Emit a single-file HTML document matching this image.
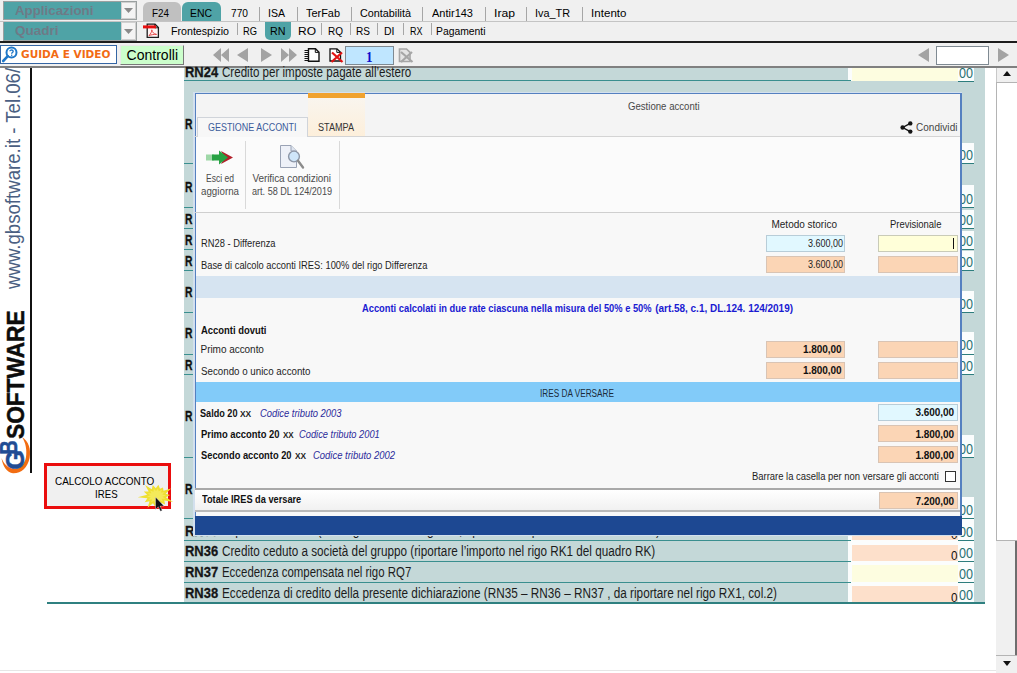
<!DOCTYPE html>
<html lang="it">
<head>
<meta charset="utf-8">
<title>Gestione acconti</title>
<style>
html,body{margin:0;padding:0;}
body{width:1017px;height:673px;position:relative;overflow:hidden;background:#fff;font-family:"Liberation Sans",sans-serif;font-size:12px;color:#000;}
.a{position:absolute;white-space:nowrap;}
.b{position:absolute;box-sizing:border-box;}
svg{position:absolute;overflow:visible;}
.sep{width:1px;background:#a6a6a6;}
.hl{height:1px;background:#3a8f8f;}
.wb{left:961px;width:13px;background:#fbfdfd;}
.inp{height:17px;border:1px solid #c3cbd3;}
.peach{background:#fbd5b5;border-color:#d9c4b4;}
.cyan{background:#e1f8ff;border-color:#b8cdd8;}
.yel{background:#ffffd9;border-color:#c9cbb8;}
</style>
</head>
<body>
<!-- TOP BARS -->
<div class="b" style="left:0;top:0;width:1017px;height:41px;background:#f0f0f0;"></div>
<div class="b" style="left:0;top:41px;width:1017px;height:2px;background:#1c1c1c;"></div>
<div class="b" style="left:0;top:43px;width:1017px;height:23px;background:#f0f0f0;"></div>
<div class="b" style="left:0;top:66px;width:1017px;height:2px;background:#808080;"></div>
<!-- combos -->
<div class="b" style="left:3px;top:1px;width:134px;height:19px;background:#fff;border:1px solid #9aa0a0;"></div>
<div class="b" style="left:4px;top:2px;width:117px;height:17px;background:#4fa3a6;"></div>
<div class="b" style="left:121px;top:2px;width:15px;height:17px;background:#f4f4f4;border:1px solid #d0d0d0;"></div>
<svg style="left:124px;top:8px" width="9" height="5"><path d="M0 0H9L4.5 5Z" fill="#8a8a8a"/></svg>
<div class="b" style="left:3px;top:21px;width:134px;height:20px;background:#fff;border:1px solid #9aa0a0;"></div>
<div class="b" style="left:4px;top:22px;width:117px;height:18px;background:#4fa3a6;"></div>
<div class="b" style="left:121px;top:22px;width:15px;height:18px;background:#f4f4f4;border:1px solid #d0d0d0;"></div>
<svg style="left:124px;top:29px" width="9" height="5"><path d="M0 0H9L4.5 5Z" fill="#8a8a8a"/></svg>
<!-- tabs row 1 -->
<div class="b" style="left:143px;top:2px;width:38px;height:19px;background:#c0c0c0;border-radius:6px 6px 0 0;"></div>
<div class="b" style="left:182px;top:2px;width:39px;height:19px;background:#4fa3a6;border-radius:6px 6px 0 0;"></div>
<div class="b sep" style="left:259px;top:7px;height:14px;"></div>
<div class="b sep" style="left:297px;top:7px;height:14px;"></div>
<div class="b sep" style="left:351px;top:7px;height:14px;"></div>
<div class="b sep" style="left:422px;top:7px;height:14px;"></div>
<div class="b sep" style="left:485px;top:7px;height:14px;"></div>
<div class="b sep" style="left:526px;top:7px;height:14px;"></div>
<div class="b sep" style="left:582px;top:7px;height:14px;"></div>
<div class="b" style="left:0;top:21px;width:1017px;height:1px;background:#c4c4c4;"></div>
<!-- tabs row 2 -->
<div class="b" style="left:265px;top:22px;width:26px;height:18px;background:#4fa3a6;border-radius:0 0 5px 5px;"></div>
<div class="b sep" style="left:237px;top:23px;height:12px;"></div>
<div class="b sep" style="left:321px;top:23px;height:12px;"></div>
<div class="b sep" style="left:350px;top:23px;height:12px;"></div>
<div class="b sep" style="left:377px;top:23px;height:12px;"></div>
<div class="b sep" style="left:403px;top:23px;height:12px;"></div>
<div class="b sep" style="left:431px;top:23px;height:12px;"></div>
<!-- pdf icon -->
<svg style="left:142.5px;top:23px" width="16" height="15" viewBox="0 0 16 15"><path d="M4.2 1.2H12L15.4 4.6V14.4H4.2Z" fill="#fff4f4" stroke="#1e1e1e" stroke-width="1.3"/><path d="M11.8 1.2V4.8H15.4" fill="none" stroke="#1e1e1e" stroke-width="1"/><rect x="0" y="2.4" width="13" height="3" fill="#e60f0f"/><path d="M6 12.6C8 10.5 8.8 8.6 8.8 6.8C9.2 9.2 10.8 11 13.6 11.4C10.8 11.2 8.2 11.8 6 12.6Z" fill="none" stroke="#e23c3c" stroke-width="0.9"/></svg>
<!-- row 3 buttons -->
<div class="b" style="left:0;top:45px;width:117px;height:19px;background:#fff;border:1px solid #3465a4;"></div>
<svg style="left:2px;top:46px" width="16" height="17" viewBox="0 0 16 17"><circle cx="9.5" cy="6.5" r="5" fill="#fff" stroke="#1f77c8" stroke-width="2"/><path d="M5.8 10.2L1.2 15" stroke="#1f77c8" stroke-width="2.6" stroke-linecap="round"/><path d="M8 5.2C8 3.6 11.2 3.6 11.2 5.3C11.2 6.5 9.6 6.5 9.6 7.8" fill="none" stroke="#1f77c8" stroke-width="1.3"/><rect x="9" y="8.6" width="1.3" height="1.3" fill="#1f77c8"/></svg>
<div class="b" style="left:120px;top:45px;width:64px;height:20px;background:#ccffcc;border:1px solid;border-color:#e8e8e8 #7a7a7a #7a7a7a #e8e8e8;"></div>
<!-- nav arrows -->
<svg style="left:213px;top:48px" width="16" height="14" viewBox="0 0 16 14"><path d="M8 0V14L0 7ZM16 0V14L8 7Z" fill="#a3a3a3"/></svg>
<svg style="left:237px;top:48px" width="11" height="14" viewBox="0 0 11 14"><path d="M11 0V14L0 7Z" fill="#a3a3a3"/></svg>
<svg style="left:261px;top:48px" width="11" height="14" viewBox="0 0 11 14"><path d="M0 0V14L11 7Z" fill="#a3a3a3"/></svg>
<svg style="left:281px;top:48px" width="16" height="14" viewBox="0 0 16 14"><path d="M0 0V14L8 7ZM8 0V14L16 7Z" fill="#a3a3a3"/></svg>
<!-- doc icons -->
<svg style="left:304px;top:48px" width="16" height="14" viewBox="0 0 16 14"><path d="M4.5 0.8H11.5L15 4.2V13.2H4.5Z" fill="#fff" stroke="#111" stroke-width="1.4"/><path d="M11.3 1V4.4H14.8" fill="none" stroke="#111" stroke-width="1"/><path d="M0.5 2.5H4M0.5 4.5H4M0.5 6.5H4M0.5 8.5H4M0.5 10.5H4M0.5 12.5H4" stroke="#111" stroke-width="1"/></svg>
<svg style="left:329px;top:48px" width="15" height="15" viewBox="0 0 15 15"><path d="M1 0.8H8L11.5 4.2V13H1Z" fill="#fff" stroke="#111" stroke-width="1.3"/><path d="M7.8 1V4.4H11.3" fill="none" stroke="#111" stroke-width="1"/><path d="M3 4.5L13.5 14M13 4.5L2.5 14" stroke="#e21212" stroke-width="2.2"/></svg>
<div class="b" style="left:345px;top:46px;width:49px;height:19px;background:#bfe6ff;border:1px solid #7f8a92;"></div>
<svg style="left:398px;top:48px" width="16" height="15" viewBox="0 0 16 15"><path d="M1.5 1H8.5L12 4.4V13.5H1.5Z" fill="#e4e4e4" stroke="#a6a6a6" stroke-width="1.6"/><path d="M3 4L14.5 14M14 4L3 14" stroke="#a6a6a6" stroke-width="2.2"/></svg>
<!-- right nav -->
<svg style="left:918px;top:48px" width="11" height="14" viewBox="0 0 11 14"><path d="M11 0V14L0 7Z" fill="#a3a3a3"/></svg>
<div class="b" style="left:936px;top:46px;width:53px;height:19px;background:#fff;border:1px solid #7f8a92;"></div>
<svg style="left:998px;top:48px" width="11" height="14" viewBox="0 0 11 14"><path d="M0 0V14L11 7Z" fill="#a3a3a3"/></svg>

<!-- LEFT SIDEBAR -->
<div class="b" style="left:30px;top:68px;width:2px;height:405px;background:#111;"></div>
<div class="a" style="left:-2px;top:289px;height:30px;transform-origin:0 0;transform:rotate(-90deg) scaleX(0.955);font-size:19.5px;line-height:30px;color:#4b5f82;">www.gbsoftware.it - Tel.06/</div>
<div class="a" style="left:0.5px;top:439px;height:30px;transform-origin:0 0;transform:rotate(-90deg) scaleX(0.945);font-size:24px;line-height:30px;font-weight:bold;color:#0c0c0c;-webkit-text-stroke:0.5px #0c0c0c;">SOFTWARE</div>
<!-- GB logo -->
<svg style="left:0;top:425px" width="32" height="50" viewBox="0 0 32 50"><path d="M22 12C28.5 16 31.3 24 29.6 33C27.8 42.5 21 48.6 13 48.3C7 47.8 2.6 41 1.5 33C4 39 8 43.4 14 44C20 44.4 24.6 40 26 32C27 25 25.8 18 22 12Z" fill="#f26d12"/><text transform="translate(24.3,44.5) rotate(-90)" font-family="Liberation Sans,sans-serif" font-weight="bold" font-size="25" fill="#214c94" stroke="#214c94" stroke-width="0.5">G</text><text transform="translate(17.3,29.5) rotate(-90) scale(0.84,1)" font-family="Liberation Sans,sans-serif" font-weight="bold" font-size="23.5" fill="#214c94" stroke="#214c94" stroke-width="0.5">B</text></svg>

<!-- CALCOLO button -->
<div class="b" style="left:44px;top:463px;width:127px;height:46px;background:#f0f0f0;border:3px solid #ea0d0d;"></div>

<!-- FORM BACKGROUND -->
<div class="b" style="left:184px;top:68px;width:801px;height:535px;background:#c4d8d8;"></div>
<!-- RN24 field -->
<div class="b" style="left:848px;top:68px;width:126px;height:13px;background:#fbfdfd;"></div><div class="b" style="left:852px;top:68px;width:106px;height:13px;background:#fdfde0;"></div>
<!-- form row lines + right column -->
<div class="b" style="left:848px;top:143px;width:126px;height:21px;background:#fbfdfd;"></div>
<div class="b" style="left:848px;top:185px;width:126px;height:22px;background:#fbfdfd;"></div>
<div class="b" style="left:848px;top:210px;width:126px;height:18px;background:#fbfdfd;"></div>
<div class="b" style="left:848px;top:231px;width:126px;height:18px;background:#fbfdfd;"></div>
<div class="b" style="left:848px;top:251px;width:126px;height:19px;background:#fbfdfd;"></div>
<div class="b" style="left:848px;top:291px;width:126px;height:21px;background:#fbfdfd;"></div>
<div class="b" style="left:848px;top:332px;width:126px;height:22px;background:#fbfdfd;"></div>
<div class="b" style="left:848px;top:354px;width:126px;height:21px;background:#fbfdfd;"></div>
<div class="b" style="left:848px;top:435px;width:126px;height:23px;background:#fbfdfd;"></div>
<div class="b" style="left:848px;top:497px;width:126px;height:106px;background:#fbfdfd;"></div>
<div class="b" style="left:852px;top:519px;width:106px;height:21px;background:#fde0cb;"></div>
<div class="b" style="left:852px;top:545px;width:106px;height:16px;background:#fde0cb;"></div>
<div class="b" style="left:852px;top:565px;width:106px;height:17px;background:#fdfde0;"></div>
<div class="b" style="left:852px;top:586px;width:106px;height:17px;background:#fde0cb;"></div>
<div class="b hl" style="left:184px;top:80px;width:667px;"></div>
<div class="b hl" style="left:184px;top:163px;width:667px;"></div>
<div class="b hl" style="left:184px;top:207px;width:667px;"></div>
<div class="b hl" style="left:184px;top:228px;width:667px;"></div>
<div class="b hl" style="left:184px;top:249px;width:667px;"></div>
<div class="b hl" style="left:184px;top:270px;width:667px;"></div>
<div class="b hl" style="left:184px;top:312px;width:667px;"></div>
<div class="b hl" style="left:184px;top:354px;width:667px;"></div>
<div class="b hl" style="left:184px;top:374px;width:667px;"></div>
<div class="b hl" style="left:184px;top:457px;width:667px;"></div>
<div class="b hl" style="left:184px;top:518px;width:667px;"></div>
<div class="b hl" style="left:184px;top:540px;width:667px;"></div>
<div class="b hl" style="left:184px;top:561px;width:667px;"></div>
<div class="b hl" style="left:184px;top:582px;width:667px;"></div>
<div class="b" style="left:958px;top:81px;width:16px;height:1px;background:#2d7d7d;"></div>
<div class="b" style="left:958px;top:163px;width:16px;height:1px;background:#2d7d7d;"></div>
<div class="b" style="left:958px;top:207px;width:16px;height:1px;background:#2d7d7d;"></div>
<div class="b" style="left:958px;top:228px;width:16px;height:1px;background:#2d7d7d;"></div>
<div class="b" style="left:958px;top:249px;width:16px;height:1px;background:#2d7d7d;"></div>
<div class="b" style="left:958px;top:270px;width:16px;height:1px;background:#2d7d7d;"></div>
<div class="b" style="left:958px;top:312px;width:16px;height:1px;background:#2d7d7d;"></div>
<div class="b" style="left:958px;top:354px;width:16px;height:1px;background:#2d7d7d;"></div>
<div class="b" style="left:958px;top:374px;width:16px;height:1px;background:#2d7d7d;"></div>
<div class="b" style="left:958px;top:457px;width:16px;height:1px;background:#2d7d7d;"></div>
<div class="b" style="left:958px;top:518px;width:16px;height:1px;background:#2d7d7d;"></div>
<div class="b" style="left:958px;top:540px;width:16px;height:1px;background:#2d7d7d;"></div>
<div class="b" style="left:958px;top:561px;width:16px;height:1px;background:#2d7d7d;"></div>
<div class="b" style="left:958px;top:582px;width:16px;height:1px;background:#2d7d7d;"></div>
<div class="b" style="left:958px;top:603px;width:16px;height:1px;background:#2d7d7d;"></div>
<div class="b" style="left:47px;top:602px;width:938px;height:2px;background:#2f8080;"></div>
<!-- scrollbar -->
<div class="b" style="left:996px;top:68px;width:21px;height:605px;background:#f0f0f0;"></div>
<div class="b" style="left:996px;top:82px;width:21px;height:459px;background:#fff;border:1px solid #b4b4b4;border-right:none;"></div>
<div class="b" style="left:996px;top:68px;width:21px;height:14px;background:#f0f0f0;border-left:1px solid #c8c8c8;"></div>
<div class="b" style="left:1015px;top:541px;width:2px;height:114px;background:#6e6e6e;"></div>
<div class="b" style="left:996px;top:655px;width:21px;height:1px;background:#b4b4b4;"></div>
<svg style="left:1003px;top:71px" width="8" height="5"><path d="M0 5H8L4 0Z" fill="#111"/></svg>
<svg style="left:1003px;top:661px" width="8" height="5"><path d="M0 0H8L4 5Z" fill="#111"/></svg>
<div class="b" style="left:0;top:670px;width:996px;height:1px;background:#e6e6e6;"></div>

<!-- base text -->
<span class="a" style="left:14.5px;top:3.4px;font-size:13px;line-height:16px;font-weight:bold;color:#6e7a86;transform:scaleX(1.023);transform-origin:0 0;">Applicazioni</span>
<span class="a" style="left:14.5px;top:23.4px;font-size:13px;line-height:16px;font-weight:bold;color:#6e7a86;transform:scaleX(1.038);transform-origin:0 0;">Quadri</span>
<span class="a" style="left:152.0px;top:6.1px;font-size:11.5px;line-height:14px;transform:scaleX(0.857);transform-origin:0 0;">F24</span>
<span class="a" style="left:190.0px;top:6.1px;font-size:11.5px;line-height:14px;transform:scaleX(0.906);transform-origin:0 0;">ENC</span>
<span class="a" style="left:231.0px;top:6.1px;font-size:11.5px;line-height:14px;transform:scaleX(0.886);transform-origin:0 0;">770</span>
<span class="a" style="left:268.0px;top:6.1px;font-size:11.5px;line-height:14px;transform:scaleX(0.917);transform-origin:0 0;">ISA</span>
<span class="a" style="left:306.0px;top:6.1px;font-size:11.5px;line-height:14px;transform:scaleX(0.950);transform-origin:0 0;">TerFab</span>
<span class="a" style="left:360.0px;top:6.1px;font-size:11.5px;line-height:14px;transform:scaleX(0.938);transform-origin:0 0;">Contabilità</span>
<span class="a" style="left:432.0px;top:6.1px;font-size:11.5px;line-height:14px;transform:scaleX(0.957);transform-origin:0 0;">Antir143</span>
<span class="a" style="left:494.0px;top:6.1px;font-size:11.5px;line-height:14px;transform:scaleX(1.059);transform-origin:0 0;">Irap</span>
<span class="a" style="left:535.0px;top:6.1px;font-size:11.5px;line-height:14px;transform:scaleX(0.944);transform-origin:0 0;">Iva_TR</span>
<span class="a" style="left:591.0px;top:6.1px;font-size:11.5px;line-height:14px;letter-spacing:0.05px;">Intento</span>
<span class="a" style="left:171.0px;top:24.3px;font-size:11.5px;line-height:14px;transform:scaleX(0.926);transform-origin:0 0;">Frontespizio</span>
<span class="a" style="left:243.0px;top:24.3px;font-size:11.5px;line-height:14px;transform:scaleX(0.812);transform-origin:0 0;">RG</span>
<span class="a" style="left:270.0px;top:24.3px;font-size:11.5px;line-height:14px;transform:scaleX(0.932);transform-origin:0 0;">RN</span>
<span class="a" style="left:298.0px;top:24.3px;font-size:11.5px;line-height:14px;transform:scaleX(1.043);transform-origin:0 0;">RO</span>
<span class="a" style="left:327.5px;top:24.3px;font-size:11.5px;line-height:14px;transform:scaleX(0.870);transform-origin:0 0;">RQ</span>
<span class="a" style="left:356.0px;top:24.3px;font-size:11.5px;line-height:14px;transform:scaleX(0.876);transform-origin:0 0;">RS</span>
<span class="a" style="left:384.0px;top:24.3px;font-size:11.5px;line-height:14px;transform:scaleX(0.913);transform-origin:0 0;">DI</span>
<span class="a" style="left:410.0px;top:24.3px;font-size:11.5px;line-height:14px;transform:scaleX(0.782);transform-origin:0 0;">RX</span>
<span class="a" style="left:436.0px;top:24.3px;font-size:11.5px;line-height:14px;transform:scaleX(0.900);transform-origin:0 0;">Pagamenti</span>
<span class="a" style="left:21.0px;top:49.1px;font-size:10px;line-height:12px;font-family:'DejaVu Sans','Liberation Sans',sans-serif;font-weight:bold;color:#f26a12;transform:scaleX(1.053);transform-origin:0 0;">GUIDA E VIDEO</span>
<span class="a" style="left:126.5px;top:46.9px;font-size:14px;line-height:17px;letter-spacing:0.02px;">Controlli</span>
<span class="a" style="left:366.0px;top:48.9px;font-size:14px;line-height:17px;font-family:'Liberation Serif',serif;font-weight:bold;color:#0a0acc;transform:scaleX(0.929);transform-origin:0 0;">1</span>
<span class="a" style="left:54.7px;top:473.9px;font-size:11.5px;line-height:14px;transform:scaleX(0.865);transform-origin:0 0;">CALCOLO ACCONTO</span>
<span class="a" style="left:94.8px;top:486.9px;font-size:11.5px;line-height:14px;transform:scaleX(0.842);transform-origin:0 0;">IRES</span>
<span class="a" style="left:185.3px;top:62.9px;font-size:15px;line-height:18px;font-weight:bold;color:#161616;transform:scaleX(0.863);transform-origin:0 0;-webkit-text-stroke:0.3px #161616;">RN24</span>
<span class="a" style="left:222.2px;top:63.7px;font-size:14px;line-height:17px;color:#1c1c1c;transform:scaleX(0.827);transform-origin:0 0;">Credito per imposte pagate all’estero</span>
<span class="a" style="left:185.3px;top:521.6px;font-size:15px;line-height:18px;font-weight:bold;color:#161616;transform:scaleX(0.863);transform-origin:0 0;-webkit-text-stroke:0.3px #161616;">RN35</span>
<span class="a" style="left:222.2px;top:522.4px;font-size:14px;line-height:17px;color:#1c1c1c;transform:scaleX(0.858);transform-origin:0 0;">Imposta a credito (se il rigo RN28 è negativo, riportare l’importo in valore assoluto)</span>
<span class="a" style="left:185.3px;top:542.4px;font-size:15px;line-height:18px;font-weight:bold;color:#161616;transform:scaleX(0.863);transform-origin:0 0;-webkit-text-stroke:0.3px #161616;">RN36</span>
<span class="a" style="left:222.2px;top:543.2px;font-size:14px;line-height:17px;color:#1c1c1c;transform:scaleX(0.837);transform-origin:0 0;">Credito ceduto a società del gruppo (riportare l’importo nel rigo RK1 del quadro RK)</span>
<span class="a" style="left:185.3px;top:563.4px;font-size:15px;line-height:18px;font-weight:bold;color:#161616;transform:scaleX(0.863);transform-origin:0 0;-webkit-text-stroke:0.3px #161616;">RN37</span>
<span class="a" style="left:222.2px;top:564.2px;font-size:14px;line-height:17px;color:#1c1c1c;transform:scaleX(0.816);transform-origin:0 0;">Eccedenza compensata nel rigo RQ7</span>
<span class="a" style="left:185.3px;top:584.4px;font-size:15px;line-height:18px;font-weight:bold;color:#161616;transform:scaleX(0.863);transform-origin:0 0;-webkit-text-stroke:0.3px #161616;">RN38</span>
<span class="a" style="left:222.2px;top:585.2px;font-size:14px;line-height:17px;color:#1c1c1c;transform:scaleX(0.839);transform-origin:0 0;">Eccedenza di credito della presente dichiarazione (RN35 – RN36 – RN37 , da riportare nel rigo RX1, col.2)</span>
<span class="a" style="left:185.3px;top:115.8px;font-size:14.5px;line-height:17px;font-weight:bold;color:#111;transform:scaleX(0.715);transform-origin:0 0;-webkit-text-stroke:0.3px #111;">R</span>
<span class="a" style="left:185.3px;top:178.6px;font-size:14.5px;line-height:17px;font-weight:bold;color:#111;transform:scaleX(0.715);transform-origin:0 0;-webkit-text-stroke:0.3px #111;">R</span>
<span class="a" style="left:185.3px;top:210.6px;font-size:14.5px;line-height:17px;font-weight:bold;color:#111;transform:scaleX(0.715);transform-origin:0 0;-webkit-text-stroke:0.3px #111;">R</span>
<span class="a" style="left:185.3px;top:231.7px;font-size:14.5px;line-height:17px;font-weight:bold;color:#111;transform:scaleX(0.715);transform-origin:0 0;-webkit-text-stroke:0.3px #111;">R</span>
<span class="a" style="left:185.3px;top:252.8px;font-size:14.5px;line-height:17px;font-weight:bold;color:#111;transform:scaleX(0.715);transform-origin:0 0;-webkit-text-stroke:0.3px #111;">R</span>
<span class="a" style="left:185.3px;top:284.4px;font-size:14.5px;line-height:17px;font-weight:bold;color:#111;transform:scaleX(0.715);transform-origin:0 0;-webkit-text-stroke:0.3px #111;">R</span>
<span class="a" style="left:185.3px;top:325.4px;font-size:14.5px;line-height:17px;font-weight:bold;color:#111;transform:scaleX(0.715);transform-origin:0 0;-webkit-text-stroke:0.3px #111;">R</span>
<span class="a" style="left:185.3px;top:356.9px;font-size:14.5px;line-height:17px;font-weight:bold;color:#111;transform:scaleX(0.715);transform-origin:0 0;-webkit-text-stroke:0.3px #111;">R</span>
<span class="a" style="left:185.3px;top:407.9px;font-size:14.5px;line-height:17px;font-weight:bold;color:#111;transform:scaleX(0.715);transform-origin:0 0;-webkit-text-stroke:0.3px #111;">R</span>
<span class="a" style="left:185.3px;top:481.0px;font-size:14.5px;line-height:17px;font-weight:bold;color:#111;transform:scaleX(0.715);transform-origin:0 0;-webkit-text-stroke:0.3px #111;">R</span>
<span class="a" style="left:958.5px;top:64.6px;font-size:14.5px;line-height:17px;color:#2a7272;transform:scaleX(0.867);transform-origin:0 0;">00</span>
<span class="a" style="left:958.5px;top:146.6px;font-size:14.5px;line-height:17px;color:#2a7272;transform:scaleX(0.867);transform-origin:0 0;">00</span>
<span class="a" style="left:958.5px;top:190.6px;font-size:14.5px;line-height:17px;color:#2a7272;transform:scaleX(0.867);transform-origin:0 0;">00</span>
<span class="a" style="left:958.5px;top:211.6px;font-size:14.5px;line-height:17px;color:#2a7272;transform:scaleX(0.867);transform-origin:0 0;">00</span>
<span class="a" style="left:958.5px;top:232.6px;font-size:14.5px;line-height:17px;color:#2a7272;transform:scaleX(0.867);transform-origin:0 0;">00</span>
<span class="a" style="left:958.5px;top:253.6px;font-size:14.5px;line-height:17px;color:#2a7272;transform:scaleX(0.867);transform-origin:0 0;">00</span>
<span class="a" style="left:958.5px;top:295.6px;font-size:14.5px;line-height:17px;color:#2a7272;transform:scaleX(0.867);transform-origin:0 0;">00</span>
<span class="a" style="left:958.5px;top:337.1px;font-size:14.5px;line-height:17px;color:#2a7272;transform:scaleX(0.867);transform-origin:0 0;">00</span>
<span class="a" style="left:958.5px;top:357.6px;font-size:14.5px;line-height:17px;color:#2a7272;transform:scaleX(0.867);transform-origin:0 0;">00</span>
<span class="a" style="left:958.5px;top:440.6px;font-size:14.5px;line-height:17px;color:#2a7272;transform:scaleX(0.867);transform-origin:0 0;">00</span>
<span class="a" style="left:958.5px;top:501.6px;font-size:14.5px;line-height:17px;color:#2a7272;transform:scaleX(0.867);transform-origin:0 0;">00</span>
<span class="a" style="left:958.5px;top:523.6px;font-size:14.5px;line-height:17px;color:#2a7272;transform:scaleX(0.867);transform-origin:0 0;">00</span>
<span class="a" style="left:958.5px;top:544.6px;font-size:14.5px;line-height:17px;color:#2a7272;transform:scaleX(0.867);transform-origin:0 0;">00</span>
<span class="a" style="left:958.5px;top:565.6px;font-size:14.5px;line-height:17px;color:#2a7272;transform:scaleX(0.867);transform-origin:0 0;">00</span>
<span class="a" style="left:958.5px;top:586.6px;font-size:14.5px;line-height:17px;color:#2a7272;transform:scaleX(0.867);transform-origin:0 0;">00</span>
<span class="a" style="left:951.0px;top:527.2px;font-size:13.5px;line-height:16px;color:#111;transform:scaleX(0.865);transform-origin:0 0;">0</span>
<span class="a" style="left:951.0px;top:548.2px;font-size:13.5px;line-height:16px;color:#111;transform:scaleX(0.865);transform-origin:0 0;">0</span>
<span class="a" style="left:951.0px;top:590.2px;font-size:13.5px;line-height:16px;color:#111;transform:scaleX(0.865);transform-origin:0 0;">0</span>
<!-- DIALOG -->
<div class="b" style="left:193px;top:91.5px;width:769px;height:444px;background:#d3e0ee;"></div>
<div class="b" style="left:195px;top:93px;width:767px;height:442px;background:#f4f4f4;border:2px solid #5580c0;border-top-width:1px;border-bottom:none;border-left-width:1px;"></div>
<div class="b" style="left:196px;top:213px;width:764px;height:303px;background:#f8f8f8;"></div>
<!-- stampa highlight + orange bar -->
<div class="b" style="left:308px;top:97px;width:57px;height:39px;background:linear-gradient(#f9f5ee,#fdefdb);"></div>
<div class="b" style="left:308px;top:93px;width:57px;height:5px;background:#f0a22e;"></div>
<!-- ribbon tab strip line -->
<div class="b" style="left:195px;top:136px;width:765px;height:1px;background:#d4d4d4;"></div>
<div class="b" style="left:197px;top:117px;width:111px;height:20px;background:#f7f7f7;border:1px solid #d0d4da;border-bottom:none;"></div>
<!-- ribbon panel -->
<div class="b" style="left:196px;top:137px;width:764px;height:75px;background:#fbfbfb;"></div>
<div class="b" style="left:245px;top:141px;width:1px;height:68px;background:#d9d9d9;"></div>
<div class="b" style="left:339px;top:141px;width:1px;height:68px;background:#d9d9d9;"></div>
<div class="b" style="left:195px;top:212px;width:765px;height:1px;background:#cfcfcf;"></div>
<!-- green/red arrow icon -->
<svg style="left:206px;top:150px" width="28" height="15" viewBox="0 0 28 15"><path d="M15 1L27 7.5L15 14L18.5 7.5Z" fill="#b3202a"/><rect x="0" y="4.5" width="8" height="6" fill="#9fd8a8"/><path d="M6 4.5H13V0.5L22 7.5L13 14.5V10.5H6Z" fill="#27a243"/></svg>
<!-- doc + magnifier icon -->
<svg style="left:280px;top:145px" width="25" height="25" viewBox="0 0 25 25"><path d="M0.5 0.5H11L16.5 6V22.5H0.5Z" fill="#eef1f8" stroke="#9aa3b5" stroke-width="1"/><path d="M11 0.5V6H16.5" fill="#dfe4ef" stroke="#9aa3b5" stroke-width="1"/><circle cx="14" cy="11.5" r="5.4" fill="#cfe6fa" stroke="#8d96a6" stroke-width="1.4"/><path d="M18 15.8L23 22.5" stroke="#8c8c8c" stroke-width="2.4" stroke-linecap="round"/></svg>
<!-- share icon -->
<svg style="left:900px;top:121px" width="13" height="13" viewBox="0 0 13 13"><path d="M10.2 2.3L2.8 6.5L10.2 10.7" fill="none" stroke="#151515" stroke-width="1.4"/><circle cx="10.3" cy="2.4" r="2.2" fill="#151515"/><circle cx="2.6" cy="6.5" r="2.2" fill="#151515"/><circle cx="10.3" cy="10.6" r="2.2" fill="#151515"/></svg>
<!-- body bands -->
<div class="b" style="left:196px;top:276px;width:764px;height:22px;background:#d6e4f1;"></div>
<div class="b" style="left:196px;top:382px;width:764px;height:20px;background:#82cbf9;"></div>
<!-- inputs -->
<div class="b inp cyan" style="left:766px;top:235px;width:79px;"></div>
<div class="b inp yel" style="left:878px;top:235px;width:80px;"></div>
<div class="b" style="left:953px;top:238px;width:1px;height:11px;background:#111;"></div>
<div class="b inp peach" style="left:766px;top:256px;width:79px;"></div>
<div class="b inp peach" style="left:878px;top:256px;width:80px;"></div>
<div class="b inp peach" style="left:766px;top:341px;width:79px;"></div>
<div class="b inp peach" style="left:878px;top:341px;width:80px;"></div>
<div class="b inp peach" style="left:766px;top:362px;width:79px;"></div>
<div class="b inp peach" style="left:878px;top:362px;width:80px;"></div>
<div class="b inp cyan" style="left:878px;top:404px;width:80px;"></div>
<div class="b inp peach" style="left:878px;top:425px;width:80px;"></div>
<div class="b inp peach" style="left:878px;top:446px;width:80px;"></div>
<div class="b" style="left:945px;top:471px;width:11px;height:11px;background:#fff;border:1px solid #333;"></div>
<!-- totale box -->
<div class="b" style="left:195px;top:488px;width:765px;height:24px;background:linear-gradient(#fff,#f1f1f1);border-top:2px solid #a9a9a9;border-bottom:2px solid #b9b9b9;"></div>
<div class="b inp peach" style="left:879px;top:492px;width:79px;"></div>
<!-- bottom blue band -->
<div class="b" style="left:195px;top:516px;width:767px;height:19px;background:#1d4892;"></div>

<!-- dialog text -->
<span class="a" style="left:628.0px;top:101.1px;font-size:10px;line-height:12px;color:#484848;transform:scaleX(0.961);transform-origin:0 0;">Gestione acconti</span>
<span class="a" style="left:207.5px;top:122.1px;font-size:10px;line-height:12px;color:#3b5b9b;transform:scaleX(0.895);transform-origin:0 0;">GESTIONE ACCONTI</span>
<span class="a" style="left:318.0px;top:122.1px;font-size:10px;line-height:12px;color:#333;transform:scaleX(0.908);transform-origin:0 0;">STAMPA</span>
<span class="a" style="left:916.0px;top:122.1px;font-size:10px;line-height:12px;color:#444;letter-spacing:0.04px;">Condividi</span>
<span class="a" style="left:206.0px;top:172.6px;font-size:10px;line-height:12px;color:#4c4c4c;transform:scaleX(0.854);transform-origin:0 0;">Esci ed</span>
<span class="a" style="left:201.0px;top:185.6px;font-size:10px;line-height:12px;color:#4c4c4c;transform:scaleX(0.976);transform-origin:0 0;">aggiorna</span>
<span class="a" style="left:252.5px;top:172.6px;font-size:10px;line-height:12px;color:#4c4c4c;letter-spacing:-0.09px;">Verifica condizioni</span>
<span class="a" style="left:252.0px;top:185.6px;font-size:10px;line-height:12px;color:#4c4c4c;transform:scaleX(0.909);transform-origin:0 0;">art. 58 DL 124/2019</span>
<span class="a" style="left:771.5px;top:219.1px;font-size:10px;line-height:12px;color:#1e1e1e;letter-spacing:-0.01px;">Metodo storico</span>
<span class="a" style="left:890.0px;top:219.1px;font-size:10px;line-height:12px;color:#1e1e1e;transform:scaleX(0.945);transform-origin:0 0;">Previsionale</span>
<span class="a" style="left:200.5px;top:238.1px;font-size:10px;line-height:12px;color:#1e1e1e;transform:scaleX(0.933);transform-origin:0 0;">RN28 - Differenza</span>
<span class="a" style="left:200.5px;top:259.9px;font-size:10px;line-height:12px;color:#1e1e1e;transform:scaleX(0.933);transform-origin:0 0;">Base di calcolo acconti IRES: 100% del rigo Differenza</span>
<span class="a" style="left:362.0px;top:302.9px;font-size:10px;line-height:12px;font-weight:bold;color:#1a1ad2;transform:scaleX(0.932);transform-origin:0 0;">Acconti calcolati in due rate ciascuna nella misura del 50% e 50%</span>
<span class="a" style="left:655.2px;top:302.9px;font-size:10px;line-height:12px;font-weight:bold;color:#1a1ad2;letter-spacing:-0.02px;">(art.58, c.1, DL.124. 124/2019)</span>
<span class="a" style="left:200.5px;top:324.9px;font-size:10px;line-height:12px;font-weight:bold;color:#111;transform:scaleX(0.943);transform-origin:0 0;">Acconti dovuti</span>
<span class="a" style="left:200.5px;top:344.1px;font-size:10px;line-height:12px;color:#1e1e1e;letter-spacing:-0.04px;">Primo acconto</span>
<span class="a" style="left:200.5px;top:365.6px;font-size:10px;line-height:12px;color:#1e1e1e;transform:scaleX(0.975);transform-origin:0 0;">Secondo o unico acconto</span>
<span class="a" style="left:540.0px;top:387.6px;font-size:10px;line-height:12px;color:#1b2b3b;transform:scaleX(0.822);transform-origin:0 0;">IRES DA VERSARE</span>
<span class="a" style="left:200.0px;top:407.9px;font-size:10px;line-height:12px;font-weight:bold;color:#111;transform:scaleX(0.912);transform-origin:0 0;">Saldo 20</span>
<span class="a" style="left:239.6px;top:408.8px;font-size:8.6px;line-height:10px;font-weight:bold;color:#222;transform:scaleX(0.977);transform-origin:0 0;">XX</span>
<span class="a" style="left:259.5px;top:407.9px;font-size:10px;line-height:12px;font-style:italic;color:#2b2b9b;transform:scaleX(0.940);transform-origin:0 0;">Codice tributo 2003</span>
<span class="a" style="left:200.5px;top:429.1px;font-size:10px;line-height:12px;font-weight:bold;color:#111;transform:scaleX(0.942);transform-origin:0 0;">Primo acconto 20</span>
<span class="a" style="left:282.5px;top:430.1px;font-size:8.6px;line-height:10px;font-weight:bold;color:#222;transform:scaleX(0.933);transform-origin:0 0;">XX</span>
<span class="a" style="left:298.8px;top:429.1px;font-size:10px;line-height:12px;font-style:italic;color:#2b2b9b;transform:scaleX(0.931);transform-origin:0 0;">Codice tributo 2001</span>
<span class="a" style="left:200.5px;top:450.1px;font-size:10px;line-height:12px;font-weight:bold;color:#111;transform:scaleX(0.931);transform-origin:0 0;">Secondo acconto 20</span>
<span class="a" style="left:294.5px;top:451.1px;font-size:8.6px;line-height:10px;font-weight:bold;color:#222;transform:scaleX(0.968);transform-origin:0 0;">XX</span>
<span class="a" style="left:313.0px;top:450.1px;font-size:10px;line-height:12px;font-style:italic;color:#2b2b9b;transform:scaleX(0.945);transform-origin:0 0;">Codice tributo 2002</span>
<span class="a" style="left:752.0px;top:470.6px;font-size:10px;line-height:12px;color:#1e1e1e;transform:scaleX(0.944);transform-origin:0 0;">Barrare la casella per non versare gli acconti</span>
<span class="a" style="left:201.8px;top:493.6px;font-size:10px;line-height:12px;font-weight:bold;color:#111;transform:scaleX(0.922);transform-origin:0 0;">Totale IRES da versare</span>
<span class="a" style="left:807.5px;top:237.9px;font-size:10px;line-height:12px;color:#1e1e1e;transform:scaleX(0.899);transform-origin:0 0;">3.600,00</span>
<span class="a" style="left:807.5px;top:258.9px;font-size:10px;line-height:12px;color:#1e1e1e;transform:scaleX(0.899);transform-origin:0 0;">3.600,00</span>
<span class="a" style="left:803.0px;top:343.9px;font-size:10px;line-height:12px;font-weight:bold;color:#111;letter-spacing:-0.06px;">1.800,00</span>
<span class="a" style="left:803.0px;top:365.1px;font-size:10px;line-height:12px;font-weight:bold;color:#111;letter-spacing:-0.06px;">1.800,00</span>
<span class="a" style="left:915.5px;top:407.4px;font-size:10px;line-height:12px;font-weight:bold;color:#111;letter-spacing:-0.06px;">3.600,00</span>
<span class="a" style="left:915.5px;top:428.6px;font-size:10px;line-height:12px;font-weight:bold;color:#111;letter-spacing:-0.06px;">1.800,00</span>
<span class="a" style="left:915.5px;top:449.8px;font-size:10px;line-height:12px;font-weight:bold;color:#111;letter-spacing:-0.06px;">1.800,00</span>
<span class="a" style="left:915.5px;top:495.8px;font-size:10px;line-height:12px;font-weight:bold;color:#111;letter-spacing:-0.06px;">7.200,00</span>
<!-- star burst + cursor -->
<svg style="left:137.5px;top:482px" width="37" height="30" viewBox="0 0 37 30"><path d="M20.4 2.7L22.0 6.7L25.0 5.4L25.5 8.7L33.1 6.4L27.6 11.7L32.1 13.1L27.9 15.2L35.1 19.9L26.3 18.4L27.1 22.4L23.2 20.8L22.5 25.8L19.2 21.8L16.8 24.3L15.0 21.3L9.6 25.8L11.5 19.3L6.7 20.2L9.4 16.3L-0.3 15.3L9.1 12.8L5.8 9.5L10.7 9.6L7.1 2.9L13.8 7.2L14.8 3.1L17.8 6.2Z" fill="#efe032"/><path d="M19.9 6.6L20.7 9.3L23.9 7.8L22.9 10.6L26.7 10.3L24.2 12.5L28.0 13.4L24.4 14.7L27.3 16.7L23.5 16.8L25.0 19.5L21.5 18.3L21.3 21.2L18.9 19.0L17.1 21.4L16.3 18.7L13.1 20.2L14.1 17.4L10.3 17.7L12.8 15.5L9.0 14.6L12.6 13.3L9.7 11.3L13.5 11.2L12.0 8.5L15.5 9.7L15.7 6.8L18.1 9.0Z" fill="#f4ea5a"/><path d="M17.5 15V27.4L20.3 24.8L22.4 29.2L24.2 28.4L22.1 24.1H26Z" fill="#0e0e16" stroke="#f4f4f4" stroke-width="0.4"/></svg>

</body>
</html>
